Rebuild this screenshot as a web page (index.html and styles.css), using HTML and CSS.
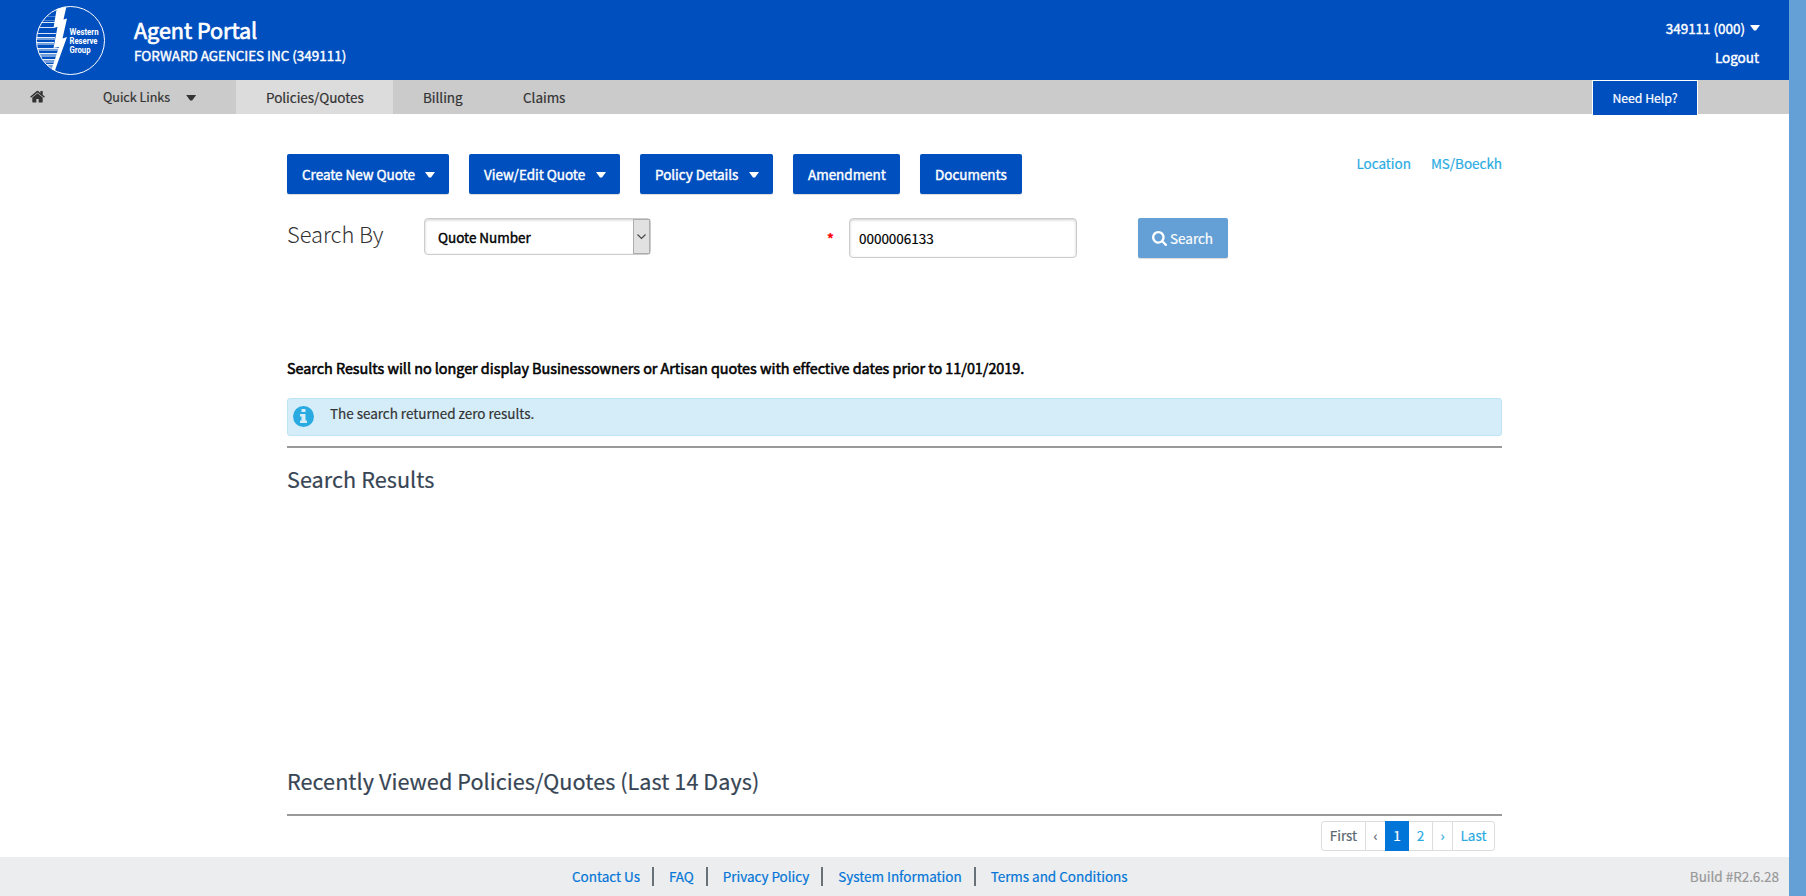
FILE: index.html
```html
<!DOCTYPE html>
<html lang="en">
<head>
<meta charset="utf-8">
<title>Agent Portal</title>
<link rel="stylesheet" href="styles.css">
</head>
<body>
<div class="page">
  <header class="header">
    <svg class="logo" viewBox="0 0 72 72" width="72" height="72">
      <defs><clipPath id="disc"><circle cx="36.500" cy="36.500" r="34"/></clipPath></defs>
      <g clip-path="url(#disc)">
        <g fill="#fff">
          <path opacity=".3" d="M0 12h22v1H0zM0 16h21v1H0z"/>
          <path opacity=".85" d="M0 18h21v1H0zM0 23h20v1H0zM0 29h22v1H0z"/>
          <path opacity=".45" d="M0 34h21v2H0zM0 39h20v2H0zM0 45h25v2H0zM0 50h23v3H0zM0 56h21v3H0zM0 61h20v3H0zM0 66h19v2H0z"/>
          <path opacity=".9" d="M0 33h21v1H0zM0 38h20v1H0zM0 44h25v1H0zM0 49h23v1H0zM0 55h21v1H0zM0 60h20v1H0z"/>
          <path d="M23.500 0H33L29.500 15.500 33 14.500 28.500 34.500 33 33 20 69 17 67 25 43 19.500 44 23.500 23 19.500 24z"/>
        </g>
      </g>
      <circle cx="36.500" cy="36.500" r="34" fill="none" stroke="#fff" stroke-width="1"/>
      <g class="logo-text" fill="#fff">
        <text x="35.500" y="30.500" textLength="29" lengthAdjust="spacingAndGlyphs">Western</text>
        <text x="35.500" y="39.800" textLength="28" lengthAdjust="spacingAndGlyphs">Reserve</text>
        <text x="35.500" y="49" textLength="21" lengthAdjust="spacingAndGlyphs">Group</text>
      </g>
    </svg>
    <div class="brand">
      <div class="brand-title strong"><span>Agent Portal</span></div>
      <div class="brand-agency strong"><span>FORWARD AGENCIES INC (349111)</span></div>
    </div>
    <div class="account strong">
      <div class="account-row"><span>349111 (000)</span><i class="caret"></i></div>
      <div class="account-row"><span>Logout</span></div>
    </div>
  </header>
  <nav class="nav">
    <svg class="home" viewBox="0 0 1664 1312" width="15" height="13"><path fill="#333" d="M1408 768v480q0 26-19 45t-45 19H960V928H704v384H320q-26 0-45-19t-19-45V768q0-1 .5-3t.5-3l575-474 575 474q1 2 1 6zm223-69l-62 74q-8 9-21 11h-3q-13 0-21-7L832 200 140 777q-12 8-24 7-13-2-21-11l-62-74q-8-10-7-23.500t11-21.500L756 55q32-26 76-26t76 26l244 204V64q0-14 9-23t23-9h192q14 0 23 9t9 23v408l219 182q10 8 11 21.500t-7 23.500z"/></svg>
    <div class="quick"><span>Quick Links</span><i class="caret"></i></div>
    <div class="tab tab-active"><span>Policies/Quotes</span></div>
    <div class="tab tab-billing"><span>Billing</span></div>
    <div class="tab tab-claims"><span>Claims</span></div>
    <div class="help"><span>Need Help?</span></div>
  </nav>
  <main class="main">
    <div class="toolbar">
      <button class="btn strong b1"><span>Create New Quote</span><i class="caret"></i></button>
      <button class="btn strong b2"><span>View/Edit Quote</span><i class="caret"></i></button>
      <button class="btn strong b3"><span>Policy Details</span><i class="caret"></i></button>
      <button class="btn strong b4"><span>Amendment</span></button>
      <button class="btn strong b5"><span>Documents</span></button>
      <div class="links"><a>Location</a><a>MS/Boeckh</a></div>
    </div>
    <div class="search">
      <div class="search-label"><span>Search By</span></div>
      <div class="select strong"><span>Quote Number</span><div class="select-arrow"><svg width="9" height="6" viewBox="0 0 9 6"><path d="M.5.5l4 4 4-4" fill="none" stroke="#444" stroke-width="1.100"/></svg></div></div>
      <div class="required">*</div>
      <div class="input"><span>0000006133</span></div>
      <button class="btn btn-search"><svg viewBox="0 0 1664 1664" width="15" height="15"><path fill="#fff" d="M1152 704q0-185-131.500-316.500T704 256 387.500 387.500 256 704t131.500 316.500T704 1152t316.500-131.500T1152 704zm512 832q0 52-38 90t-90 38q-54 0-90-38l-343-342q-179 124-399 124-143 0-273.500-55.500t-225-150-150-225T0 704t55.500-273.500 150-225 225-150T704 0t273.500 55.500 225 150 150 225T1408 704q0 220-124 399l343 343q37 37 37 90z"/></svg><span>Search</span></button>
    </div>
    <p class="notice"><span>Search Results will no longer display Businessowners or Artisan quotes with effective dates prior to 11/01/2019.</span></p>
    <div class="alert">
      <svg width="21" height="21" viewBox="0 0 21 21"><circle cx="10.500" cy="10.500" r="10.500" fill="#29abe2"/><path fill="#d4edf9" d="M8.500 3h4v3h-4zM7 8h5.500v6.500H14V17H7v-2.500h1.500v-4H7z"/></svg>
      <span>The search returned zero results.</span>
    </div>
    <section class="results"><h2><span>Search Results</span></h2></section>
    <section class="recent"><h2><span>Recently Viewed Policies/Quotes (Last 14 Days)</span></h2></section>
    <div class="pager">
      <span class="p-first muted">First</span><span class="p-prev muted">‹</span><span class="p-on">1</span><span class="p-two">2</span><span class="p-next">›</span><span class="p-last">Last</span>
    </div>
  </main>
  <footer class="footer">
    <div class="foot-links">
      <a class="f1"><span>Contact Us</span></a><a class="f2"><span>FAQ</span></a><a class="f3"><span>Privacy Policy</span></a><a class="f4"><span>System Information</span></a><a class="f5"><span>Terms and Conditions</span></a>
    </div>
    <span class="build">Build #R2.6.28</span>
  </footer>
</div>
</body>
</html>
```
FILE: styles.css
```css
* { box-sizing: border-box; }
body {
  margin: 0;
  background: #649fd6;
  font-family: "Noto Sans CJK SC", "Noto Sans", sans-serif;
  font-size: 13.500px;
  line-height: 20px;
  letter-spacing: -.03px;
  color: #333;
  -webkit-text-stroke: .2px currentColor;
}
span, a { white-space: nowrap; }
.strong { -webkit-text-stroke: .4px currentColor; }
.page {
  width: 1789px;
  height: 896px;
  background: #fff;
  display: flex;
  flex-direction: column;
}
.caret {
  width: 10px;
  height: 6px;
  margin-top: 2px;
  background: currentColor;
  clip-path: polygon(0 0, 100% 0, 60% 90%, 40% 90%);
  flex: none;
}
.header {
  height: 80px;
  background: #004fbf;
  color: #fff;
  display: flex;
  padding: 4px 30px 0 34px;
  flex: none;
}
.logo-text {
  font: bold 8.500px "Roboto", sans-serif;
  letter-spacing: 0;
  -webkit-text-stroke: 0;
}
.brand { margin-left: 28px; padding-top: 11px; }
.brand-title { font-size: 21.600px; line-height: 30px; -webkit-text-stroke: .7px currentColor; }
.brand-agency { font-size: 13.500px; line-height: 20px; }
.account { margin-left: auto; padding-top: 14px; }
.account-row {
  display: flex;
  align-items: center;
  justify-content: flex-end;
  gap: 5px;
  height: 20px;
  margin-bottom: 9px;
}
.account-row .caret { margin-top: 0; margin-right: -1px; }
.nav {
  height: 34px;
  background: #cbcbcb;
  display: flex;
  flex: none;
}
.home { margin: 10px 0 0 30px; }
.quick {
  display: flex;
  align-items: center;
  gap: 16px;
  width: 133px;
  margin-left: 58px;
  font-size: 12.600px;
}
.tab { display: flex; align-items: center; font-size: 13.500px; }
.tab-active { width: 157px; background: #dcdcdc; padding-left: 30px; }
.tab-billing { width: 100px; padding-left: 30px; }
.tab-claims { padding-left: 30px; }
.help {
  width: 106px;
  height: 36px;
  margin-left: auto;
  margin-right: 91px;
  background: #004fbf;
  border: 1px solid #fff;
  color: #fff;
  display: flex;
  align-items: center;
  justify-content: center;
  font-size: 12.300px;
}
.main { width: 1215px; margin-left: 287px; height: 743px; }
.toolbar { display: flex; gap: 20px; padding-top: 40px; }
.btn {
  height: 40px;
  border: 0;
  border-radius: 2px;
  background: #004fbf;
  color: #fff;
  font: 400 13.500px/20px "Noto Sans CJK SC", sans-serif;
  letter-spacing: -.03px;
  padding: 0 14px 0 15px;
  display: flex;
  align-items: center;
  justify-content: space-between;
  flex: none;
  box-shadow: 0 1px 1px rgba(0, 0, 0, .15);
}
.b1 { width: 162px; }
.b2 { width: 151px; }
.b3 { width: 133px; }
.b4 { width: 107px; }
.b5 { width: 102px; }
.links { margin: -1px 0 0 auto; display: flex; gap: 20px; color: #29abe2; }
.search { display: flex; height: 40px; margin-top: 24px; }
.search-label {
  width: 137px;
  font-size: 21.900px;
  font-weight: 300;
  line-height: 31px;
  -webkit-text-stroke: 0;
}
.select {
  width: 227px;
  height: 37px;
  border: 1px solid #ccc;
  border-radius: 4px;
  box-shadow: inset 0 1px 3px rgba(0, 0, 0, .2);
  display: flex;
  align-items: center;
  justify-content: space-between;
  padding-left: 13px;
  color: #000;
}
.select-arrow {
  width: 17px;
  height: 35px;
  background: #e1e1e1;
  border: 1px solid #adadad;
  display: flex;
  align-items: center;
  justify-content: center;
}
.required { width: 22px; margin-left: 176px; padding-top: 10px; color: #f00; font-weight: 700; font-size: 13.500px; }
.input {
  width: 228px;
  height: 40px;
  border: 1px solid #ccc;
  border-radius: 4px;
  box-shadow: inset 0 1px 3px rgba(0, 0, 0, .2);
  display: flex;
  align-items: center;
  padding-left: 9px;
  color: #000;
}
.btn-search { width: 90px; margin-left: 61px; padding: 0 15px 0 14px; background: #649fd6; }
.notice {
  margin: 99px 0 0;
  height: 41px;
  line-height: 22px;
  color: #000;
  font-size: 14.400px;
  -webkit-text-stroke: .55px currentColor;
}
.alert {
  height: 38px;
  border: 1px solid #bce4f5;
  border-radius: 3px;
  background: #d4edf9;
  display: flex;
  gap: 16px;
  padding: 7px 5px 0;
}
.alert span { margin-top: -3px; }
.results { height: 294px; margin-top: 10px; border-top: 2px solid #999; padding-top: 15px; }
.recent { height: 76px; border-bottom: 2px solid #999; padding-top: 25px; }
h2 { margin: 0; font-weight: 400; font-size: 21.600px; line-height: 32px; letter-spacing: .06px; color: #374554; }
.pager {
  display: flex;
  width: 174px;
  height: 30px;
  margin: 5px 7px 0 auto;
  border: 1px solid #ddd;
  border-radius: 3px;
  color: #29abe2;
  line-height: 26px;
  text-align: center;
}
.pager span { border-left: 1px solid #ddd; }
.pager .p-first { width: 43px; border-left: 0; }
.p-prev { width: 20px; }
.pager .p-on { width: 24px; background: #0275d8; border: 0; color: #fff; margin: -1px 0; line-height: 28px; }
.pager .p-two { width: 23px; border-left: 0; }
.p-next { width: 20px; }
.p-last { width: 42px; }
.pager .muted { color: #5b6770; }
.footer { height: 39px; background: #ecedee; display: flex; align-items: center; padding: 0 10px 0 572px; justify-content: space-between; }
.foot-links { display: flex; color: #0275d8; }
.foot-links a { height: 19px; border-right: 2px solid #687078; margin-right: 15px; padding-right: 12px; line-height: 19px; }
.foot-links .f5 { border: 0; }
.build { color: #999; margin-top: -1px; }
```
